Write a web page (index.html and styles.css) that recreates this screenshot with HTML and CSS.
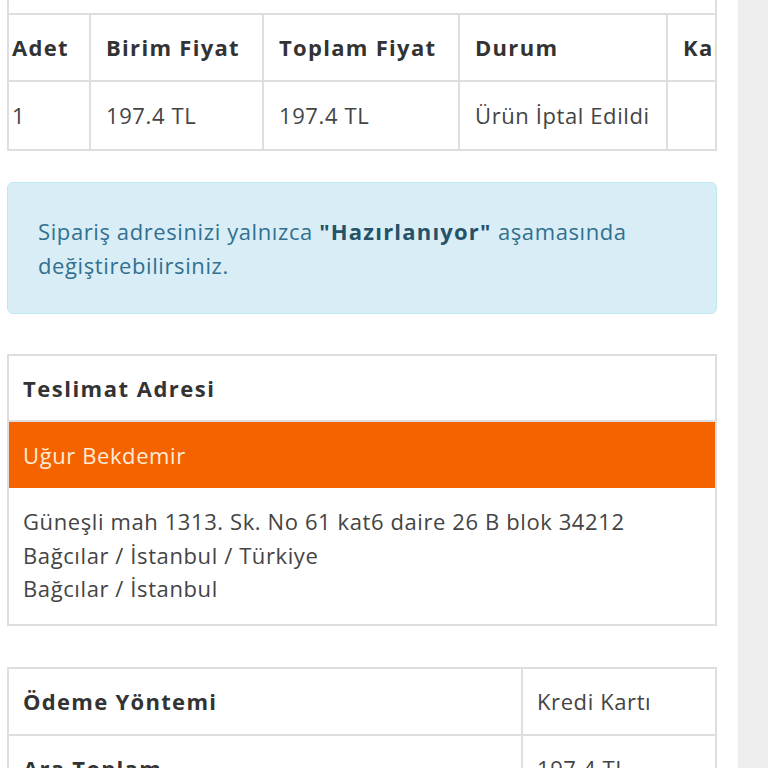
FILE: index.html
```html
<!DOCTYPE html>
<html lang="tr">
<head>
    <meta charset="UTF-8">
    <meta name="viewport" content="width=device-width, initial-scale=1.0">
    <title>Sipariş Detayı</title>
    <link rel="stylesheet" href="styles.css">
</head>
<body>
    <div class="page">
        <!-- Order products table -->
        <div class="table-wrap">
            <table class="products">
                <colgroup>
                    <col class="c-qty">
                    <col class="c-unit">
                    <col class="c-total">
                    <col class="c-status">
                    <col class="c-extra">
                </colgroup>
                <tr class="top-row">
                    <td colspan="5"></td>
                </tr>
                <tr>
                    <th class="first">Adet</th>
                    <th>Birim Fiyat</th>
                    <th>Toplam Fiyat</th>
                    <th>Durum</th>
                    <th>Kargo</th>
                </tr>
                <tr>
                    <td class="first">1</td>
                    <td>197.4 TL</td>
                    <td>197.4 TL</td>
                    <td>Ürün İptal Edildi</td>
                    <td></td>
                </tr>
            </table>
        </div>

        <!-- Info message -->
        <div class="alert-info">
            Sipariş adresinizi yalnızca <strong>"Hazırlanıyor"</strong> aşamasında değiştirebilirsiniz.
        </div>

        <!-- Delivery address -->
        <div class="panel">
            <div class="panel-heading">Teslimat Adresi</div>
            <div class="panel-name">Uğur Bekdemir</div>
            <div class="panel-body">
                Güneşli mah 1313. Sk. No 61 kat6 daire 26 B blok 34212<br>
                Bağcılar / İstanbul / Türkiye<br>
                Bağcılar / İstanbul
            </div>
        </div>

        <!-- Payment summary -->
        <table class="summary">
            <tr>
                <th>Ödeme Yöntemi</th>
                <td>Kredi Kartı</td>
            </tr>
            <tr>
                <th>Ara Toplam</th>
                <td>197.4 TL</td>
            </tr>
        </table>
    </div>
    <div class="side-strip"></div>
</body>
</html>
```

FILE: styles.css
```css
/* General Styles */
body {
    font-family: "Open Sans", "Noto Sans", sans-serif;
    font-size: 22px;
    letter-spacing: 0.6px;
    color: #444;
    margin: 0;
    padding: 0;
    background-color: #fff;
    display: flex;
    height: 768px;
    overflow: hidden;
}

.page {
    width: 710px;
    margin-left: 7px;
    flex-shrink: 0;
}

.side-strip {
    width: 30px;
    margin-left: 21px;
    background-color: #eeeeee;
    flex-shrink: 0;
}

/* Products table */
.table-wrap {
    overflow: hidden;
    border-left: 2px solid #dedede;
    border-right: 2px solid #dedede;
    box-sizing: border-box;
}

.products {
    border-collapse: collapse;
    table-layout: fixed;
    width: 820px;
    margin-left: -2px;
}

.c-qty { width: 82px; }
.c-unit { width: 173px; }
.c-total { width: 196px; }
.c-status { width: 208px; }
.c-extra { width: 161px; }

.products th,
.products td {
    border: 2px solid #dedede;
    padding: 17px 15px;
    line-height: 33px;
    text-align: left;
    white-space: nowrap;
    overflow: hidden;
}

.products th {
    padding-top: 16px;
    padding-bottom: 16px;
    color: #333;
    font-weight: 700;
    letter-spacing: 1.3px;
}

.products .first {
    padding-left: 3px;
}

.products .top-row td {
    border-top: none;
    padding: 0;
    height: 13px;
    line-height: 13px;
}

/* Alert */
.alert-info {
    margin-top: 31px;
    background-color: #d9edf7;
    border: 1px solid #bce8f1;
    border-radius: 6px;
    color: #31708f;
    padding: 31px 30px;
    line-height: 34px;
}

.alert-info strong {
    color: #245269;
    letter-spacing: 1.2px;
}

/* Address panel */
.panel {
    margin-top: 40px;
    border: 2px solid #dedede;
}

.panel-heading {
    padding: 16px 14px 15px;
    line-height: 33px;
    font-weight: 700;
    color: #333;
    letter-spacing: 1.5px;
    border-bottom: 2px solid #dedede;
}

.panel-name {
    background-color: #f56200;
    color: #fdecd6;
    padding: 17px 14px 16px;
    line-height: 33px;
}

.panel-body {
    padding: 17px 14px 18px;
    line-height: 33.5px;
    color: #444;
}

/* Summary table */
.summary {
    margin-top: 41px;
    width: 100%;
    border-collapse: collapse;
}

.summary th,
.summary td {
    border: 2px solid #dedede;
    padding: 16px 14px;
    line-height: 33px;
    text-align: left;
}

.summary th {
    width: 484px;
    font-weight: 700;
    color: #333;
    letter-spacing: 1.3px;
}
```
